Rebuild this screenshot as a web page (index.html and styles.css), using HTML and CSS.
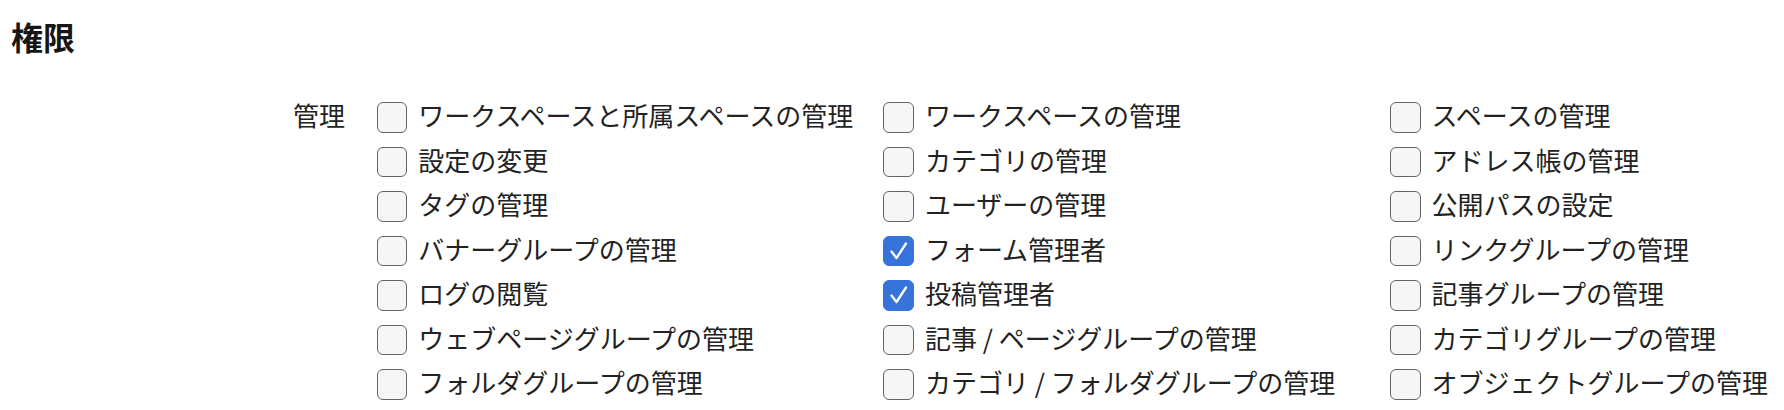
FILE: index.html
```html
<!DOCTYPE html>
<html lang="ja">
<head>
<meta charset="utf-8">
<title>権限</title>
<link rel="stylesheet" href="styles.css">
</head>
<body>
<section class="perm">
  <h2 class="perm-title">権限</h2>
  <div class="field">
    <div class="field-label">管理</div>
    <ul class="options">
      <li class="opt"><span class="box"></span><span class="txt">ワークスペースと所属スペースの管理</span></li>
      <li class="opt"><span class="box"></span><span class="txt">ワークスペースの管理</span></li>
      <li class="opt"><span class="box"></span><span class="txt">スペースの管理</span></li>
      <li class="opt"><span class="box"></span><span class="txt">設定の変更</span></li>
      <li class="opt"><span class="box"></span><span class="txt">カテゴリの管理</span></li>
      <li class="opt"><span class="box"></span><span class="txt">アドレス帳の管理</span></li>
      <li class="opt"><span class="box"></span><span class="txt">タグの管理</span></li>
      <li class="opt"><span class="box"></span><span class="txt">ユーザーの管理</span></li>
      <li class="opt"><span class="box"></span><span class="txt">公開パスの設定</span></li>
      <li class="opt"><span class="box"></span><span class="txt">バナーグループの管理</span></li>
      <li class="opt"><span class="box checked"><svg viewBox="0 0 30 30" width="30" height="30"><path d="M7.5 15.5 L12.5 22 L22 7.5" fill="none" stroke="#fff" stroke-width="2.3" stroke-linecap="round" stroke-linejoin="round"/></svg></span><span class="txt">フォーム管理者</span></li>
      <li class="opt"><span class="box"></span><span class="txt">リンクグループの管理</span></li>
      <li class="opt"><span class="box"></span><span class="txt">ログの閲覧</span></li>
      <li class="opt"><span class="box checked"><svg viewBox="0 0 30 30" width="30" height="30"><path d="M7.5 15.5 L12.5 22 L22 7.5" fill="none" stroke="#fff" stroke-width="2.3" stroke-linecap="round" stroke-linejoin="round"/></svg></span><span class="txt">投稿管理者</span></li>
      <li class="opt"><span class="box"></span><span class="txt">記事グループの管理</span></li>
      <li class="opt"><span class="box"></span><span class="txt">ウェブページグループの管理</span></li>
      <li class="opt"><span class="box"></span><span class="txt">記事 / ページグループの管理</span></li>
      <li class="opt"><span class="box"></span><span class="txt">カテゴリグループの管理</span></li>
      <li class="opt"><span class="box"></span><span class="txt">フォルダグループの管理</span></li>
      <li class="opt"><span class="box"></span><span class="txt">カテゴリ / フォルダグループの管理</span></li>
      <li class="opt"><span class="box"></span><span class="txt">オブジェクトグループの管理</span></li>
    </ul>
  </div>
</section>
</body>
</html>
```

FILE: styles.css
```css
html, body {
  margin: 0;
  padding: 0;
  background: #ffffff;
}

body {
  font-family: "Noto Sans CJK JP", "Noto Sans", "Liberation Sans", sans-serif;
  color: #222222;
  width: 1784px;
  overflow: hidden;
}

.perm {
  padding: 16px 0 0 11px;
}

.perm-title {
  margin: 0;
  font-size: 32px;
  line-height: 40px;
  font-weight: 700;
  color: #161616;
}

.field {
  display: flex;
  align-items: flex-start;
  margin-top: 39px;
  gap: 32px;
}

.field-label {
  width: 334px;
  flex: none;
  text-align: right;
  font-size: 26px;
  line-height: 40.5px;
  padding-bottom: 4px;
}

.options {
  list-style: none;
  margin: 0 0 0 -0.3px;
  padding: 0;
  display: grid;
  grid-template-columns: 506.7px 506.7px 400px;
  grid-auto-rows: 44.5px;
}

.opt {
  display: flex;
  align-items: center;
  gap: 11px;
  white-space: nowrap;
}

.box {
  flex: none;
  box-sizing: border-box;
  width: 30.5px;
  height: 30.5px;
  border: 1.6px solid #646464;
  border-radius: 6px;
  background: #f6f6f6;
  display: flex;
  align-items: center;
  justify-content: center;
}

.box.checked {
  background: #3674dc;
  border-color: #3674dc;
}

.box svg {
  display: block;
  flex: none;
}

.txt {
  font-size: 26px;
  line-height: 40.5px;
  padding-bottom: 4px;
}
```
